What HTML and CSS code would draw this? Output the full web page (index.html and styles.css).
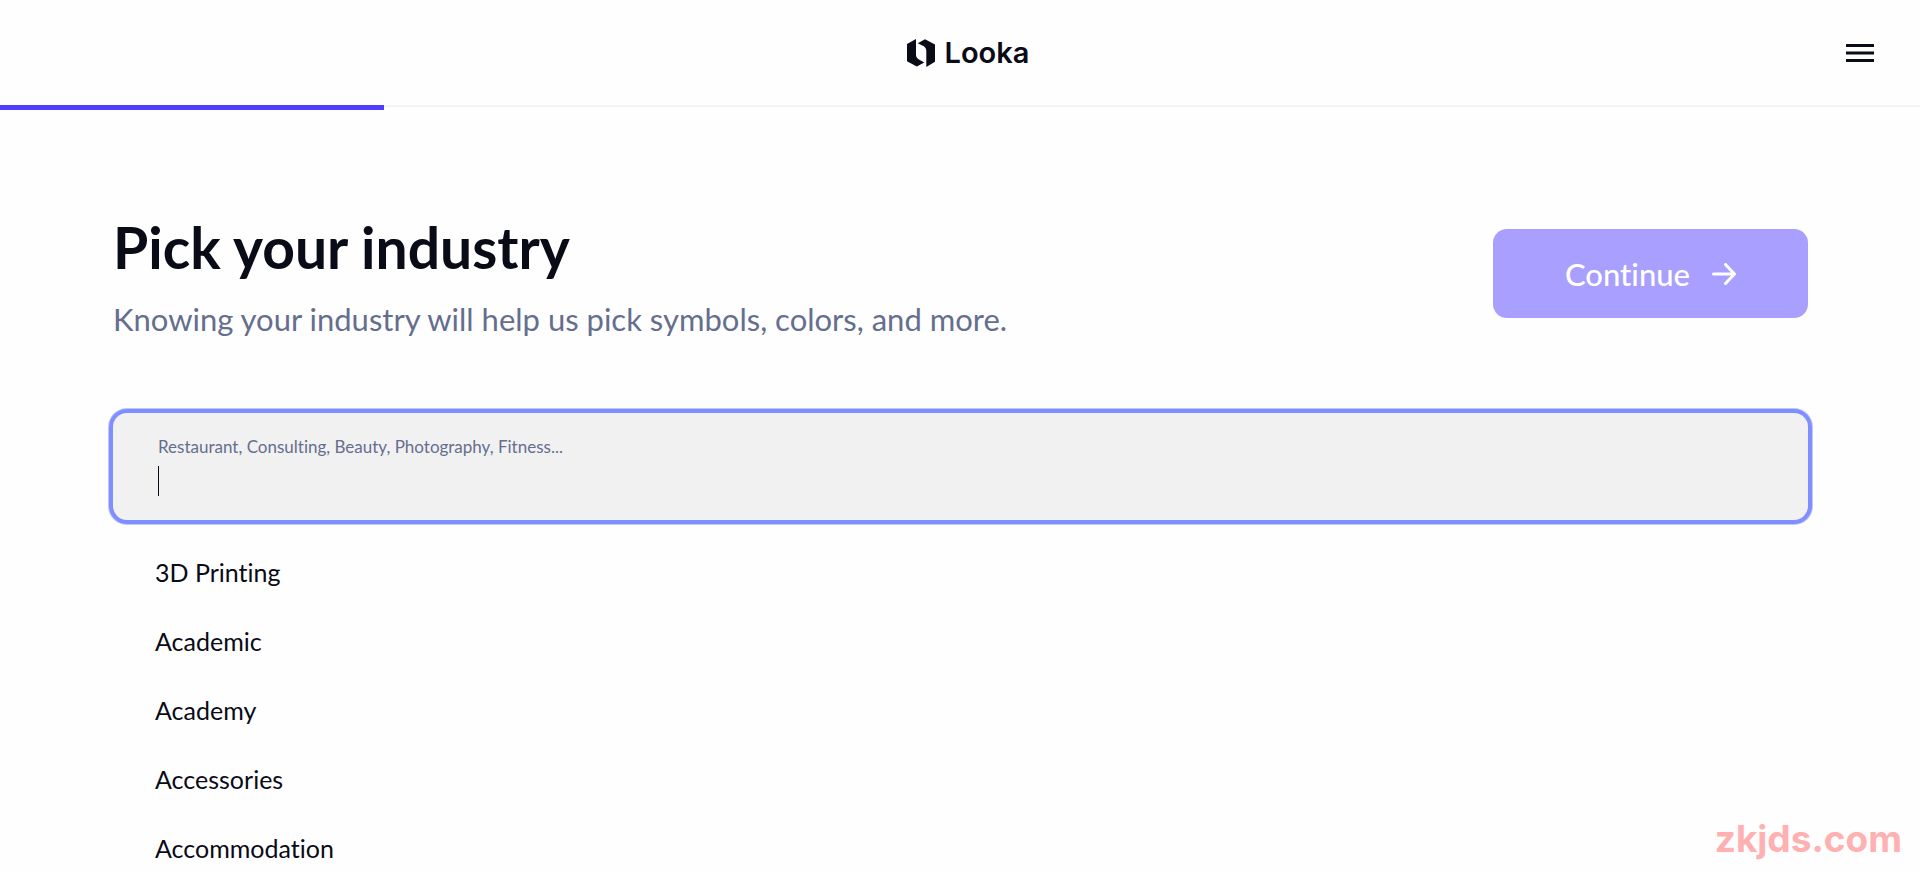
FILE: index.html
```
<!DOCTYPE html>
<html lang="en">
<head>
    <meta charset="UTF-8">
    <meta name="viewport" content="width=device-width, initial-scale=1.0">
    <title>Pick your industry - Looka</title>
    <link rel="stylesheet" href="styles.css">
</head>
<body>
    <header class="header">
        <a href="#" class="logo">
            <svg class="logo-mark" width="28" height="28" viewBox="0 0 28 28" fill="#090b17">
                <path d="M9 0v15.500c0 2.200.8 3.600 2.500 4.700L17.300 23.500 9.800 27.500 0 22.300V5z"/>
                <path d="M19.300 28V12c0-2.200-.8-3.600-2.500-4.700L10.800 4.200 18 .3 28 5.500v17.300z"/>
            </svg>
            <span>Looka</span>
        </a>
        <button type="button" class="menu" aria-label="Menu">
            <svg width="28" height="18" viewBox="0 0 28 18" fill="#090b17">
                <path d="M0 0h28v3H0zM0 7.500h28v3H0zM0 15h28v3H0z"/>
            </svg>
        </button>
        <div class="progress"></div>
    </header>
    <main class="container">
        <div class="intro">
            <div>
                <h1>Pick your industry</h1>
                <p>Knowing your industry will help us pick symbols, colors, and more.</p>
            </div>
            <button type="button" class="continue">
                Continue
                <svg width="24" height="22" viewBox="0 0 24 22" fill="none" stroke="#fff" stroke-width="3" stroke-linecap="round" stroke-linejoin="round">
                    <path d="M1.500 11h21M13.500 1.500l9 9.500-9 9.500"/>
                </svg>
            </button>
        </div>
        <div class="search">
            <label for="industry">Restaurant, Consulting, Beauty, Photography, Fitness...</label>
            <div class="search-row">
                <span class="caret"></span>
                <input type="text" id="industry" autocomplete="off">
            </div>
        </div>
        <ul class="industries">
            <li>3D Printing</li>
            <li>Academic</li>
            <li>Academy</li>
            <li>Accessories</li>
            <li>Accommodation</li>
        </ul>
    </main>
    <div class="watermark">zkjds.com</div>
</body>
</html>
```
FILE: styles.css
```
* {
    margin: 0;
    padding: 0;
    box-sizing: border-box;
}
body {
    height: 100vh;
    overflow: hidden;
    background: #fefefe;
    color: #090b17;
    font-family: Lato, sans-serif;
    font-variant-ligatures: none;
}
button {
    border: none;
    cursor: pointer;
    font-family: inherit;
    font-variant-ligatures: none;
}
.header {
    position: relative;
    display: grid;
    grid-template-columns: 1fr auto 1fr;
    align-items: center;
    height: 107px;
    padding: 0 46px;
    border-bottom: 2px solid #f5f5f5;
}
.logo {
    grid-column: 2;
    display: flex;
    align-items: center;
    gap: 10px;
    margin-left: 16px;
    color: inherit;
    font-family: Inter, sans-serif;
    font-size: 29px;
    font-weight: 600;
    line-height: 36px;
    text-decoration: none;
}
.menu {
    display: flex;
    justify-self: end;
    background: none;
}
.progress {
    position: absolute;
    left: 0;
    top: 105px;
    width: 20%;
    height: 5px;
    background: #4f3dff;
}
.container {
    padding: 108px 112px 0 113px;
}
.intro {
    display: flex;
    justify-content: space-between;
    align-items: flex-start;
    margin-bottom: 74px;
}
h1 {
    font-size: 57px;
    line-height: 64px;
    font-weight: 700;
}
p {
    margin-top: 20px;
    color: #656e8e;
    font-size: 31px;
    line-height: 40px;
}
.continue {
    display: flex;
    justify-content: center;
    align-items: center;
    gap: 22px;
    width: 315px;
    height: 89px;
    margin-top: 14px;
    border-radius: 14px;
    background: #a99fff;
    color: #fff;
    font-size: 31px;
    font-weight: 500;
}
.search {
    padding: 24px 45px;
    border-radius: 14px;
    background: #f1f1f1;
    box-shadow: 0 0 0 4px #808fff, 0 0 0 5px #bfc7ff;
}
.search label {
    display: block;
    color: #656e8e;
    font-size: 17px;
    line-height: 20px;
}
.search-row {
    display: flex;
    margin-top: 9px;
}
.caret {
    width: 1px;
    height: 30px;
    background: #090b17;
}
.search input {
    flex: 1;
    height: 30px;
    border: none;
    outline: none;
    background: none;
    caret-color: transparent;
    font-family: inherit;
    font-size: 25px;
}
.industries {
    margin-top: 18px;
    list-style: none;
}
.industries li {
    padding: 0 42px;
    font-size: 25px;
    line-height: 69px;
}
.watermark {
    position: absolute;
    right: 18px;
    bottom: 11px;
    color: #ffb0b0;
    font-family: Inter, sans-serif;
    font-size: 37px;
    font-weight: 700;
    line-height: 44px;
}
```
